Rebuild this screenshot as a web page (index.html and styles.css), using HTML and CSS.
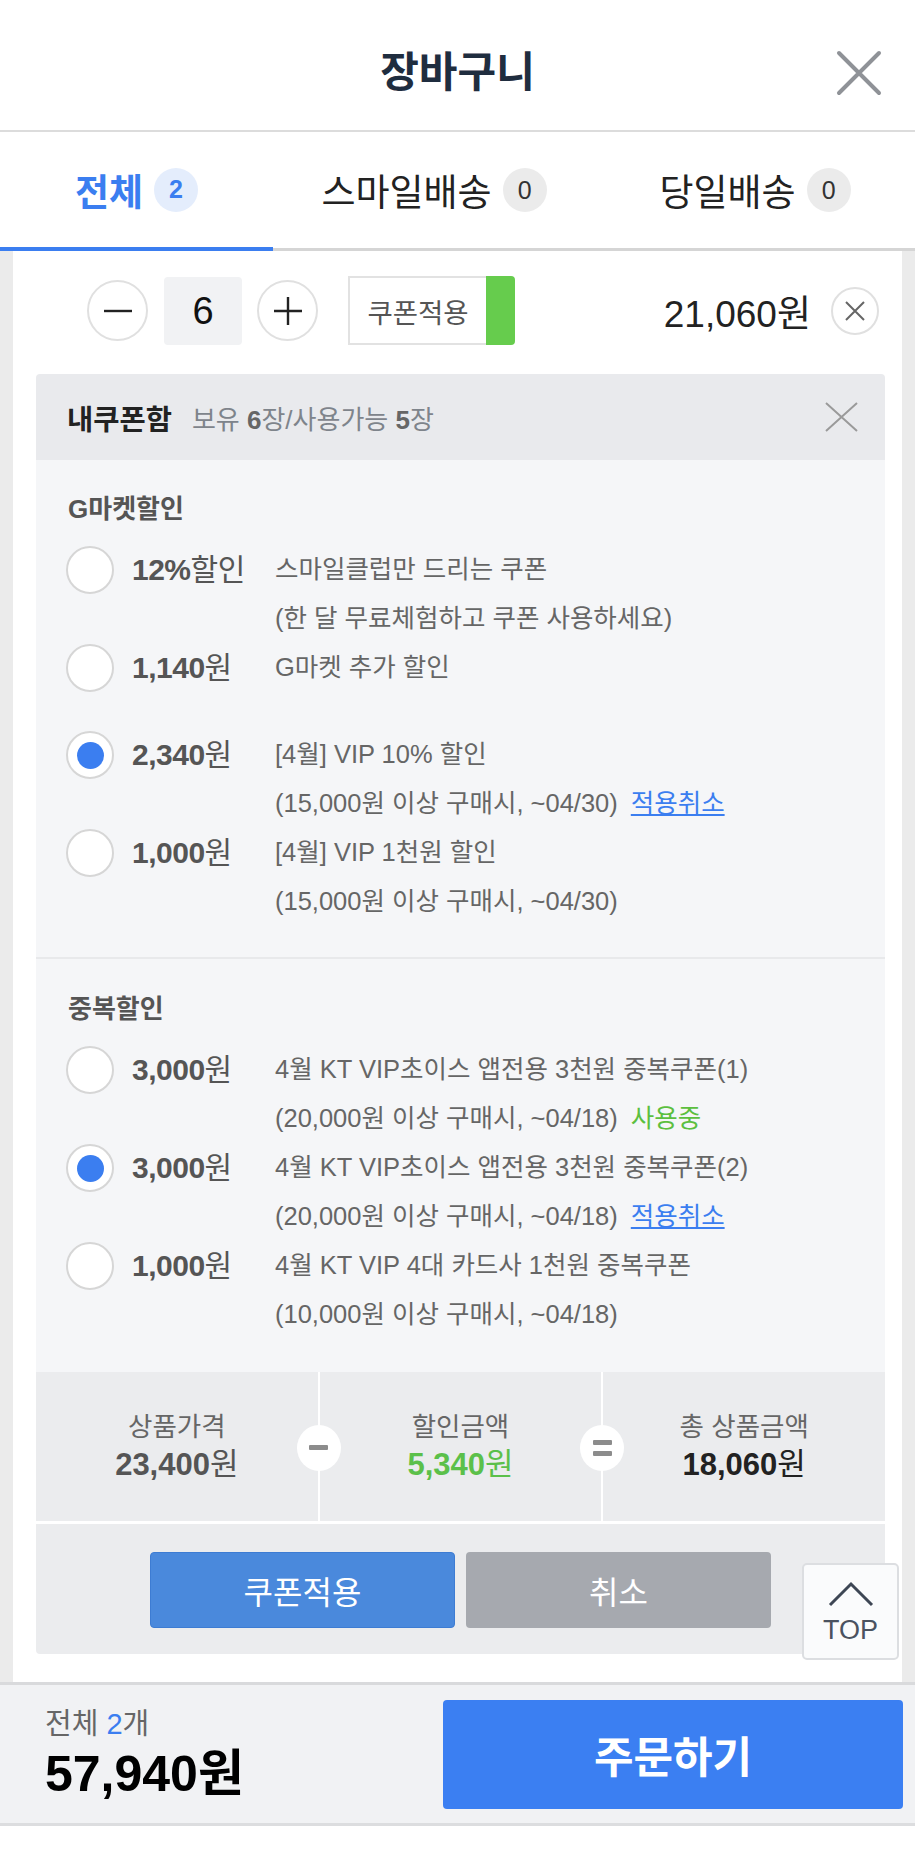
FILE: index.html
```html
<!DOCTYPE html>
<html lang="ko">
<head>
<meta charset="utf-8">
<title>장바구니</title>
<link rel="stylesheet" href="styles.css">
</head>
<body>
<header class="header">
  <span class="header-side"></span>
  <h1 class="title">장바구니</h1>
  <button class="close" aria-label="닫기">
    <svg viewBox="0 0 48 46" width="48" height="46"><path d="M4 3 L44 43 M44 3 L4 43" stroke="#8f9297" stroke-width="4" stroke-linecap="round" fill="none"/></svg>
  </button>
</header>
<nav class="tabs">
  <div class="tab active"><span>전체</span><span class="badge">2</span></div>
  <div class="tab"><span>스마일배송</span><span class="badge">0</span></div>
  <div class="tab"><span>당일배송</span><span class="badge">0</span></div>
</nav>
<main class="content">
  <section class="card">
    <div class="qty-row">
      <button class="circle-btn" aria-label="수량 빼기">
        <svg viewBox="0 0 30 30" width="30" height="30"><path d="M1 15 H29" stroke="#222" stroke-width="2.4" fill="none"/></svg>
      </button>
      <div class="qty">6</div>
      <button class="circle-btn plus" aria-label="수량 더하기">
        <svg viewBox="0 0 30 30" width="30" height="30"><path d="M1 15 H29 M15 1 V29" stroke="#222" stroke-width="2.4" fill="none"/></svg>
      </button>
      <div class="coupon-btn"><span class="coupon-label">쿠폰적용</span><span class="coupon-flag"></span></div>
      <div class="price">21,060원</div>
      <button class="remove" aria-label="삭제">
        <svg viewBox="0 0 20 20" width="20" height="20"><path d="M1 1 L19 19 M19 1 L1 19" stroke="#666" stroke-width="2" fill="none"/></svg>
      </button>
    </div>

    <div class="couponbox">
      <div class="cb-head">
        <span class="cb-title">내쿠폰함</span>
        <span class="cb-info">보유 <b>6</b>장/사용가능 <b>5</b>장</span>
        <svg class="cb-close" viewBox="0 0 33 30" width="33" height="30"><path d="M1 1 L32 29 M32 1 L1 29" stroke="#9a9a9a" stroke-width="2" fill="none"/></svg>
      </div>

      <div class="cb-section">
        <h3 class="sec-title">G마켓할인</h3>
        <ul class="items">
          <li class="item">
            <span class="radio"></span>
            <span class="amount">12%<span class="u">할인</span></span>
            <div class="desc"><p>스마일클럽만 드리는 쿠폰</p><p>(한 달 무료체험하고 쿠폰 사용하세요)</p></div>
          </li>
          <li class="item">
            <span class="radio"></span>
            <span class="amount">1,140<span class="u">원</span></span>
            <div class="desc"><p>G마켓 추가 할인</p></div>
          </li>
          <li class="item">
            <span class="radio on"></span>
            <span class="amount">2,340<span class="u">원</span></span>
            <div class="desc"><p>[4월] VIP 10% 할인</p><p>(15,000원 이상 구매시, ~04/30)<a class="link" href="#">적용취소</a></p></div>
          </li>
          <li class="item">
            <span class="radio"></span>
            <span class="amount">1,000<span class="u">원</span></span>
            <div class="desc"><p>[4월] VIP 1천원 할인</p><p>(15,000원 이상 구매시, ~04/30)</p></div>
          </li>
        </ul>
      </div>

      <div class="cb-section second">
        <h3 class="sec-title">중복할인</h3>
        <ul class="items">
          <li class="item">
            <span class="radio"></span>
            <span class="amount">3,000<span class="u">원</span></span>
            <div class="desc"><p>4월 KT VIP초이스 앱전용 3천원 중복쿠폰(1)</p><p>(20,000원 이상 구매시, ~04/18)<span class="using">사용중</span></p></div>
          </li>
          <li class="item">
            <span class="radio on"></span>
            <span class="amount">3,000<span class="u">원</span></span>
            <div class="desc"><p>4월 KT VIP초이스 앱전용 3천원 중복쿠폰(2)</p><p>(20,000원 이상 구매시, ~04/18)<a class="link" href="#">적용취소</a></p></div>
          </li>
          <li class="item">
            <span class="radio"></span>
            <span class="amount">1,000<span class="u">원</span></span>
            <div class="desc"><p>4월 KT VIP 4대 카드사 1천원 중복쿠폰</p><p>(10,000원 이상 구매시, ~04/18)</p></div>
          </li>
        </ul>
      </div>

      <div class="summary">
        <div class="sum-col">
          <span class="sum-label">상품가격</span>
          <span class="sum-value">23,400<span class="u">원</span></span>
        </div>
        <div class="sum-col">
          <span class="op"><span class="bar"></span></span>
          <span class="sum-label">할인금액</span>
          <span class="sum-value green">5,340<span class="u">원</span></span>
        </div>
        <div class="sum-col">
          <span class="op eq"><span class="bar"></span><span class="bar"></span></span>
          <span class="sum-label">총 상품금액</span>
          <span class="sum-value dark">18,060<span class="u">원</span></span>
        </div>
      </div>

      <div class="cb-actions">
        <button class="btn btn-apply">쿠폰적용</button>
        <button class="btn btn-cancel">취소</button>
      </div>
    </div>

    <button class="top-btn" aria-label="맨 위로">
      <svg viewBox="0 0 48 26" width="48" height="26"><path d="M3 24 L24 3 L45 24" stroke="#3d4654" stroke-width="3" fill="none"/></svg>
      <span class="top-label">TOP</span>
    </button>
  </section>
</main>
<footer class="footer">
  <div class="f-left">
    <div class="f-count">전체 <b>2</b>개</div>
    <div class="f-total">57,940원</div>
  </div>
  <button class="order">주문하기</button>
</footer>
</body>
</html>
```

FILE: styles.css
```css
* { box-sizing: border-box; margin: 0; padding: 0; }
html, body { background: #fff; }
body {
  width: 915px;
  min-height: 1868px;
  font-family: "Liberation Sans", "Noto Sans CJK KR", sans-serif;
  color: #222;
}
button { font: inherit; color: inherit; border: none; background: none; cursor: pointer; }
ul { list-style: none; }
a { color: inherit; }

/* header */
.header {
  height: 132px;
  border-bottom: 2px solid #dcdcdc;
  display: grid;
  grid-template-columns: 1fr auto 1fr;
  align-items: center;
  padding-top: 16px;
}
.title {
  font-size: 42px;
  font-weight: 700;
  color: #1f2d3f;
  line-height: 50px;
}
.close {
  justify-self: end;
  margin-right: 32px;
  width: 48px;
  height: 46px;
  display: flex;
}

/* tabs */
.tabs {
  display: grid;
  grid-template-columns: 273px 322px 1fr;
  height: 119px;
}
.tab {
  display: flex;
  align-items: center;
  justify-content: center;
  gap: 11px;
  border-bottom: 3px solid #d5d5d5;
  font-size: 37px;
  color: #222;
}
.tab.active {
  color: #3b7ef0;
  font-weight: 700;
  border-bottom: 4px solid #3b7ef0;
}
.badge {
  width: 44px;
  height: 44px;
  border-radius: 50%;
  background: #ebebeb;
  color: #333;
  font-size: 25px;
  font-weight: 400;
  display: flex;
  align-items: center;
  justify-content: center;
}
.tab.active .badge { background: #e4edfc; color: #3b7ef0; font-weight: 700; }

/* content */
.content { background: #ebebeb; padding: 0 13px; }
.card {
  position: relative;
  background: #fff;
  padding: 25px 17px 28px 23px;
}
.qty-row {
  display: flex;
  align-items: center;
  height: 69px;
  padding-left: 51px;
  padding-right: 6px;
}
.circle-btn {
  width: 61px;
  height: 61px;
  border-radius: 50%;
  border: 2px solid #e0e0e0;
  display: flex;
  align-items: center;
  justify-content: center;
  flex-shrink: 0;
}
.qty {
  margin: 0 15px 0 16px;
  width: 78px;
  height: 68px;
  border-radius: 4px;
  background: #f1f2f4;
  font-size: 38px;
  line-height: 68px;
  text-align: center;
  color: #111;
}
.coupon-btn { display: flex; height: 69px; margin-left: 30px; }
.coupon-label {
  width: 138px;
  border: 2px solid #e2e2e2;
  border-right: none;
  display: flex;
  align-items: center;
  justify-content: center;
  font-size: 27.5px;
  color: #555;
}
.coupon-flag { width: 29px; background: #66cc4d; border-radius: 0 4px 4px 0; }
.price { margin-left: auto; font-size: 37px; color: #222; }
.remove {
  margin-left: 20px;
  width: 48px;
  height: 48px;
  border-radius: 50%;
  border: 2px solid #e0e0e0;
  display: flex;
  align-items: center;
  justify-content: center;
}

/* coupon box */
.couponbox {
  margin-top: 29px;
  background: #fff;
  border-radius: 4px;
  overflow: hidden;
}
.cb-head {
  height: 86px;
  background: #e9eaed;
  display: flex;
  align-items: center;
  padding: 0 27px 0 31px;
}
.cb-title { font-size: 28.5px; font-weight: 700; color: #222; }
.cb-info { margin-left: 20px; font-size: 26px; color: #7e848b; }
.cb-info b { color: #666; font-weight: 700; }
.cb-close { margin-left: auto; }

.cb-section {
  background: #f5f6f8;
  padding: 28px 30px 31px;
}
.cb-section.second {
  border-top: 2px solid #e8e9eb;
  padding-top: 29px;
  padding-bottom: 33px;
}
.sec-title {
  font-size: 26px;
  font-weight: 700;
  color: #555;
  line-height: 42px;
  margin-bottom: 15px;
  padding-left: 2px;
}
.item { display: flex; min-height: 87px; }
.radio {
  width: 48px;
  height: 48px;
  margin-top: 1px;
  border-radius: 50%;
  border: 2px solid #d6d6d6;
  background: #fff;
  flex-shrink: 0;
  display: flex;
  align-items: center;
  justify-content: center;
}
.radio.on::after {
  content: "";
  width: 27px;
  height: 27px;
  border-radius: 50%;
  background: #3b7ef0;
}
.amount {
  margin-left: 18px;
  width: 143px;
  flex-shrink: 0;
  font-size: 30px;
  font-weight: 700;
  line-height: 49px;
  color: #555;
  letter-spacing: -0.5px;
}
.u { font-weight: 400; }
.desc { font-size: 25.5px; line-height: 49px; color: #666; white-space: nowrap; }
.link { color: #3b7ef0; text-decoration: underline; margin-left: 13px; }
.using { color: #5cbf3f; margin-left: 13px; }

/* summary */
.summary {
  display: grid;
  grid-template-columns: repeat(3, 1fr);
  column-gap: 2px;
  height: 149px;
}
.sum-col {
  position: relative;
  background: #ebecee;
  display: flex;
  flex-direction: column;
  align-items: center;
  justify-content: center;
}
.sum-label { font-size: 26.5px; color: #666; line-height: 37px; }
.sum-value { font-size: 31px; font-weight: 700; color: #555; line-height: 38px; }
.sum-value.green { color: #5bc04a; }
.sum-value.dark { color: #222; }
.op {
  position: absolute;
  left: -23px;
  top: 50%;
  margin-top: -22px;
  width: 44px;
  height: 46px;
  border-radius: 50%;
  background: #fff;
  display: flex;
  flex-direction: column;
  align-items: center;
  justify-content: center;
  gap: 6px;
}
.op .bar { width: 19px; height: 5px; border-radius: 1px; background: #8c8c8c; }

.cb-actions {
  margin-top: 3px;
  height: 130px;
  background: #ebecee;
  display: flex;
  justify-content: center;
  gap: 11px;
  padding-top: 28px;
}
.btn {
  width: 305px;
  height: 76px;
  border-radius: 4px;
  font-size: 32px;
  color: #fff;
}
.btn-apply { background: #4a89dc; border: 1px solid #3d7cd3; }
.btn-cancel { background: #a6a9af; }

.top-btn {
  position: absolute;
  right: 3px;
  bottom: 22px;
  width: 97px;
  height: 97px;
  background: #fafbfc;
  border: 2px solid #dcdee1;
  border-radius: 5px;
  display: flex;
  flex-direction: column;
  align-items: center;
  padding-top: 16px;
}
.top-label { font-size: 27px; line-height: 30px; color: #4a5260; margin-top: 8px; }

/* footer */
.footer {
  height: 144px;
  border-top: 3px solid #d9dadc;
  border-bottom: 3px solid #dcdddf;
  background: #f1f2f4;
  display: flex;
  align-items: center;
  padding: 0 12px 0 45px;
}
.f-left { flex: 1; }
.f-count { font-size: 29px; line-height: 40px; color: #666; }
.f-count b { color: #3b7ef0; font-weight: 400; }
.f-total { font-size: 50px; line-height: 60px; font-weight: 700; color: #000; }
.order {
  width: 460px;
  height: 109px;
  border-radius: 4px;
  background: #3b7ff2;
  color: #fff;
  font-size: 43px;
  font-weight: 700;
}
```
